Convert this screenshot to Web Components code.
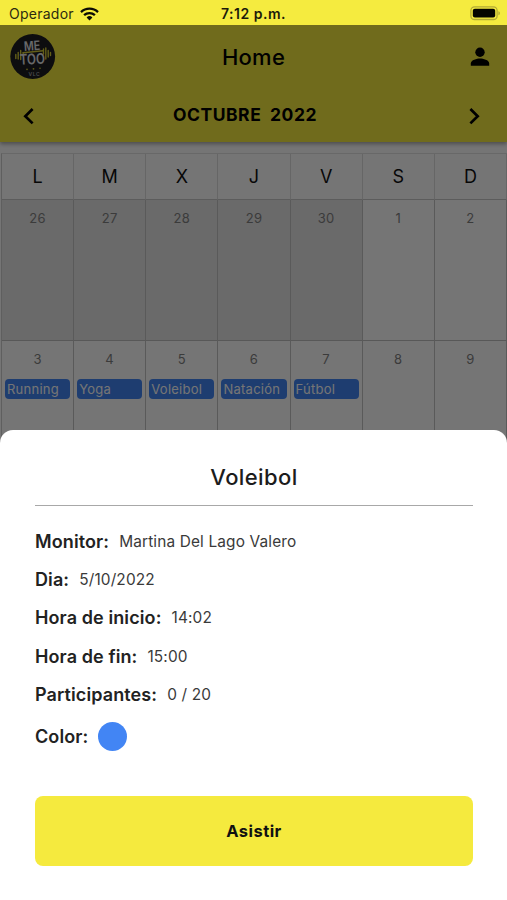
<!DOCTYPE html>
<html lang="es">
<head>
<meta charset="UTF-8">
<meta name="viewport" content="width=device-width, initial-scale=1.0">
<title>Home</title>
<style>
    html, body {
        margin: 0;
        height: 100%;
    }

    body {
        font-family: Inter, "Liberation Sans", sans-serif;
        background-color: #fff;
        color: #000;
        overflow: hidden;
    }
</style>
</head>
<body>
<gym-app>
    <status-bar slot="status" carrier="Operador" time="7:12 p.m."></status-bar>
    <app-header slot="page" month="OCTUBRE" year="2022">Home</app-header>
    <month-calendar slot="page"></month-calendar>
    <event-sheet slot="sheet" heading="Voleibol">
        <detail-row label="Monitor:">Martina Del Lago Valero</detail-row>
        <detail-row label="Dia:">5/10/2022</detail-row>
        <detail-row label="Hora de inicio:">14:02</detail-row>
        <detail-row label="Hora de fin:">15:00</detail-row>
        <detail-row label="Participantes:">0 / 20</detail-row>
        <detail-row class="color" label="Color:"><color-dot></color-dot></detail-row>
        <action-button slot="action">Asistir</action-button>
    </event-sheet>
</gym-app>

<script>
class GymApp extends HTMLElement {
    connectedCallback() {
        this.attachShadow({ mode: 'open' });
        this.shadowRoot.innerHTML = `
            <style>
                :host {
                    display: flex;
                    flex-direction: column;
                    height: 900px;
                    overflow: hidden;
                }

                .content {
                    position: relative;
                    flex: 1;
                    min-height: 0;
                    overflow: hidden;
                }

                /* Dims the page behind the bottom sheet */
                .backdrop {
                    position: absolute;
                    inset: 0;
                    background-color: rgba(0, 0, 0, 0.54);
                    display: flex;
                    flex-direction: column;
                    justify-content: flex-end;
                }
            </style>
            <slot name="status"></slot>
            <div class="content">
                <slot name="page"></slot>
                <div class="backdrop"><slot name="sheet"></slot></div>
            </div>
        `;
    }
}

class StatusBar extends HTMLElement {
    connectedCallback() {
        this.attachShadow({ mode: 'open' });
        this.shadowRoot.innerHTML = `
            <style>
                :host {
                    display: grid;
                    grid-template-columns: 1fr auto 1fr;
                    align-items: center;
                    height: 25px;
                    box-sizing: border-box;
                    padding: 2px 6px 0 9px;
                    background-color: #f5eb3f;
                    font-size: 14px;
                    line-height: 22px;
                }

                .carrier {
                    display: flex;
                    align-items: center;
                    gap: 6px;
                    color: #2c2a10;
                    letter-spacing: 0.25px;
                }

                .time {
                    font-weight: 600;
                    color: #1c1b0a;
                    letter-spacing: 0.5px;
                    margin-left: -3px;
                }

                .battery {
                    justify-self: end;
                    margin-top: -1px;
                }

                svg {
                    display: block;
                }
            </style>
            <div class="carrier">
                <span>${this.getAttribute('carrier')}</span>
                <svg width="19" height="14" viewBox="0 0 19 14" fill="none" stroke="#0c0c04" stroke-width="2.3">
                    <path d="M1 5.1a12.2 12.2 0 0 1 17 0"/>
                    <path d="M4.1 8.2a7.8 7.8 0 0 1 10.8 0"/>
                    <path d="M6.6 10.4a4.2 4.2 0 0 1 5.8 0L9.5 13.5z" fill="#0c0c04" stroke="none"/>
                </svg>
            </div>
            <span class="time">${this.getAttribute('time')}</span>
            <svg class="battery" width="31" height="15" viewBox="0 0 31 15">
                <rect x="0.9" y="0.9" width="26.2" height="12.6" rx="3.6" fill="none" stroke="#b3ab35" stroke-width="1.3"/>
                <rect x="2.8" y="2.8" width="22.4" height="8.8" rx="2" fill="#050500"/>
                <path d="M28.4 5.2c2 .6 2 3.4 0 4z" fill="#b3ab35"/>
            </svg>
        `;
    }
}

class ClubLogo extends HTMLElement {
    connectedCallback() {
        this.attachShadow({ mode: 'open' });
        this.shadowRoot.innerHTML = `
            <style>
                :host {
                    display: block;
                    width: 46px;
                    height: 46px;
                }

                svg {
                    display: block;
                }

                text {
                    font-family: Inter, "Liberation Sans", sans-serif;
                    text-anchor: middle;
                }
            </style>
            <svg width="46" height="46" viewBox="0 0 46 46">
                <circle cx="22.7" cy="22.5" r="22.4" fill="#1d1d22"/>
                <g stroke="#d6cc35" stroke-width="1.4" stroke-linecap="round">
                    <path d="M5.8 20.5v4M8.2 18.5v6.5M10.7 16.5v9M13.2 19v3M33.5 15v5M35.8 14v11M38.2 16.5v6.5M40.5 18.5v3"/>
                    <path d="M13 18.8L33 16.8" stroke-width="1.4"/>
                </g>
                <g fill="#e4e4e8" font-weight="600">
                    <text transform="translate(22.3 16.4) rotate(-4) scale(.82 1)" font-size="13">ME</text>
                    <text transform="translate(22.6 30.2) rotate(-3) scale(.8 1)" font-size="14.5">TOO</text>
                </g>
                <g fill="#d6cc35">
                    <circle cx="17" cy="35.4" r=".8"/>
                    <circle cx="23.5" cy="34.8" r=".9"/>
                    <circle cx="30" cy="34.2" r=".8"/>
                </g>
                <text x="24.5" y="42.2" font-size="5" letter-spacing=".6" font-weight="600" fill="#a5a5aa">VLC</text>
            </svg>
        `;
    }
}

class AppHeader extends HTMLElement {
    connectedCallback() {
        this.attachShadow({ mode: 'open' });
        this.shadowRoot.innerHTML = `
            <style>
                :host {
                    display: block;
                    position: relative;
                    height: 117px;
                    background-color: #f5ea3e;
                    box-shadow: 0 2px 4px rgba(0, 0, 0, 0.35);
                }

                .top {
                    display: grid;
                    grid-template-columns: 1fr auto 1fr;
                    align-items: center;
                    height: 63px;
                    padding: 0 15px 0 10px;
                }

                .title {
                    font-size: 22px;
                    font-weight: 500;
                    letter-spacing: 0.25px;
                    margin-left: 5px;
                }

                .profile {
                    justify-self: end;
                }

                .month {
                    display: flex;
                    align-items: center;
                    justify-content: space-between;
                    height: 54px;
                    padding: 0 21px 0 17px;
                    font-size: 17.5px;
                    font-weight: 700;
                    letter-spacing: 0.55px;
                    word-spacing: 4px;
                }

                .label {
                    padding-bottom: 1px;
                    margin-right: 13px;
                }

                svg {
                    display: block;
                }
            </style>
            <div class="top">
                <club-logo></club-logo>
                <span class="title"><slot></slot></span>
                <svg class="profile" width="24" height="24" viewBox="0 0 24 24">
                    <circle cx="12" cy="7.2" r="4.7"/>
                    <path d="M2.8 20.8v-2.3c0-3.4 6.1-4.9 9.2-4.9s9.2 1.5 9.2 4.9v2.3z"/>
                </svg>
            </div>
            <div class="month">
                <svg width="22" height="22" viewBox="0 0 22 22" fill="none" stroke="#000" stroke-width="2.7">
                    <path d="M15.6 5L8.3 12.2l7.3 7.2"/>
                </svg>
                <span class="label">${this.getAttribute('month')} ${this.getAttribute('year')}</span>
                <svg width="22" height="22" viewBox="0 0 22 22" fill="none" stroke="#000" stroke-width="2.7">
                    <path d="M6.4 5l7.3 7.2-7.3 7.2"/>
                </svg>
            </div>
        `;
    }
}

class MonthCalendar extends HTMLElement {
    connectedCallback() {
        const weekdays = ['L', 'M', 'X', 'J', 'V', 'S', 'D'];
        const days = [26, 27, 28, 29, 30, 1, 2, 3, 4, 5, 6, 7, 8, 9];
        const events = { 3: 'Running', 4: 'Yoga', 5: 'Voleibol', 6: 'Natación', 7: 'Fútbol' };

        this.attachShadow({ mode: 'open' });
        this.shadowRoot.innerHTML = `
            <style>
                :host {
                    display: grid;
                    grid-template-columns: repeat(7, 1fr);
                    grid-template-rows: 46px 141px 141px;
                    margin: 11px 0 0 1px;
                    border-top: 1px solid #e2e2e2;
                    border-left: 1px solid #d0d0d0;
                }

                .weekday {
                    display: flex;
                    align-items: center;
                    justify-content: center;
                    font-size: 18px;
                    color: #111;
                    border-right: 1px solid #dedede;
                    border-bottom: 1px solid #c8c8c8;
                }
            </style>
            ${weekdays.map(name => `<div class="weekday">${name}</div>`).join('')}
            ${days.map(day => `
                <calendar-day day="${day}" class="${day > 9 ? 'outside' : ''}">
                    ${events[day] ? `<event-chip>${events[day]}</event-chip>` : ''}
                </calendar-day>
            `).join('')}
        `;
    }
}

class CalendarDay extends HTMLElement {
    connectedCallback() {
        this.attachShadow({ mode: 'open' });
        this.shadowRoot.innerHTML = `
            <style>
                :host {
                    display: flex;
                    flex-direction: column;
                    min-width: 0;
                    box-sizing: border-box;
                    padding: 10px 3px 0;
                    border-right: 1px solid #c4c4c4;
                    border-bottom: 1px solid #c0c0c0;
                }

                :host(.outside) {
                    background-color: #e6e6e6;
                }

                .number {
                    text-align: center;
                    font-size: 13px;
                    line-height: 17px;
                    letter-spacing: 0.3px;
                    color: #828282;
                    margin-bottom: 11px;
                }
            </style>
            <div class="number">${this.getAttribute('day')}</div>
            <slot></slot>
        `;
    }
}

class EventChip extends HTMLElement {
    connectedCallback() {
        this.attachShadow({ mode: 'open' });
        this.shadowRoot.innerHTML = `
            <style>
                :host {
                    display: block;
                    height: 20px;
                    line-height: 20px;
                    padding-left: 2px;
                    border-radius: 4px;
                    background-color: #4285f4;
                    color: #fff;
                    font-size: 13px;
                    letter-spacing: 0.25px;
                    white-space: nowrap;
                    overflow: hidden;
                }
            </style>
            <slot></slot>
        `;
    }
}

class EventSheet extends HTMLElement {
    connectedCallback() {
        this.attachShadow({ mode: 'open' });
        this.shadowRoot.innerHTML = `
            <style>
                :host {
                    display: flex;
                    flex-direction: column;
                    height: 470px;
                    box-sizing: border-box;
                    padding: 32px 34px 34px 35px;
                    border-radius: 13px 13px 0 0;
                    background-color: #fff;
                }

                .heading {
                    padding-bottom: 12px;
                    border-bottom: 1px solid #a8a8a8;
                    text-align: center;
                    font-size: 22px;
                    line-height: 31px;
                    font-weight: 500;
                    letter-spacing: 0.4px;
                    color: #1c1c1c;
                }

                .details {
                    flex: 1;
                    padding-top: 16.5px;
                }
            </style>
            <div class="heading">${this.getAttribute('heading')}</div>
            <div class="details"><slot></slot></div>
            <slot name="action"></slot>
        `;
    }
}

class DetailRow extends HTMLElement {
    connectedCallback() {
        this.attachShadow({ mode: 'open' });
        this.shadowRoot.innerHTML = `
            <style>
                :host {
                    display: flex;
                    align-items: center;
                    gap: 10px;
                    height: 38.2px;
                }

                :host(.color) {
                    height: 46px;
                }

                .label {
                    font-size: 18px;
                    font-weight: 600;
                    letter-spacing: 0.1px;
                    color: #222;
                }

                .value {
                    font-size: 15.4px;
                    letter-spacing: 0.15px;
                    color: #3a3a3a;
                }
            </style>
            <span class="label">${this.getAttribute('label')}</span>
            <span class="value"><slot></slot></span>
        `;
    }
}

class ColorDot extends HTMLElement {
    connectedCallback() {
        this.attachShadow({ mode: 'open' });
        this.shadowRoot.innerHTML = `
            <style>
                :host {
                    display: block;
                    width: 29px;
                    height: 29px;
                    border-radius: 50%;
                    background-color: #4285f4;
                }
            </style>
        `;
    }
}

class ActionButton extends HTMLElement {
    connectedCallback() {
        this.attachShadow({ mode: 'open' });
        this.shadowRoot.innerHTML = `
            <style>
                :host {
                    display: block;
                }

                button {
                    display: block;
                    width: 100%;
                    height: 70px;
                    padding: 0 0 1px;
                    border: none;
                    border-radius: 8px;
                    background-color: #f5ea3e;
                    color: #111;
                    font-family: inherit;
                    font-size: 16.5px;
                    font-weight: 700;
                    letter-spacing: 0.45px;
                }
            </style>
            <button><slot></slot></button>
        `;
    }
}

customElements.define('club-logo', ClubLogo);
customElements.define('status-bar', StatusBar);
customElements.define('app-header', AppHeader);
customElements.define('event-chip', EventChip);
customElements.define('calendar-day', CalendarDay);
customElements.define('month-calendar', MonthCalendar);
customElements.define('color-dot', ColorDot);
customElements.define('detail-row', DetailRow);
customElements.define('action-button', ActionButton);
customElements.define('event-sheet', EventSheet);
customElements.define('gym-app', GymApp);
</script>
</body>
</html>
